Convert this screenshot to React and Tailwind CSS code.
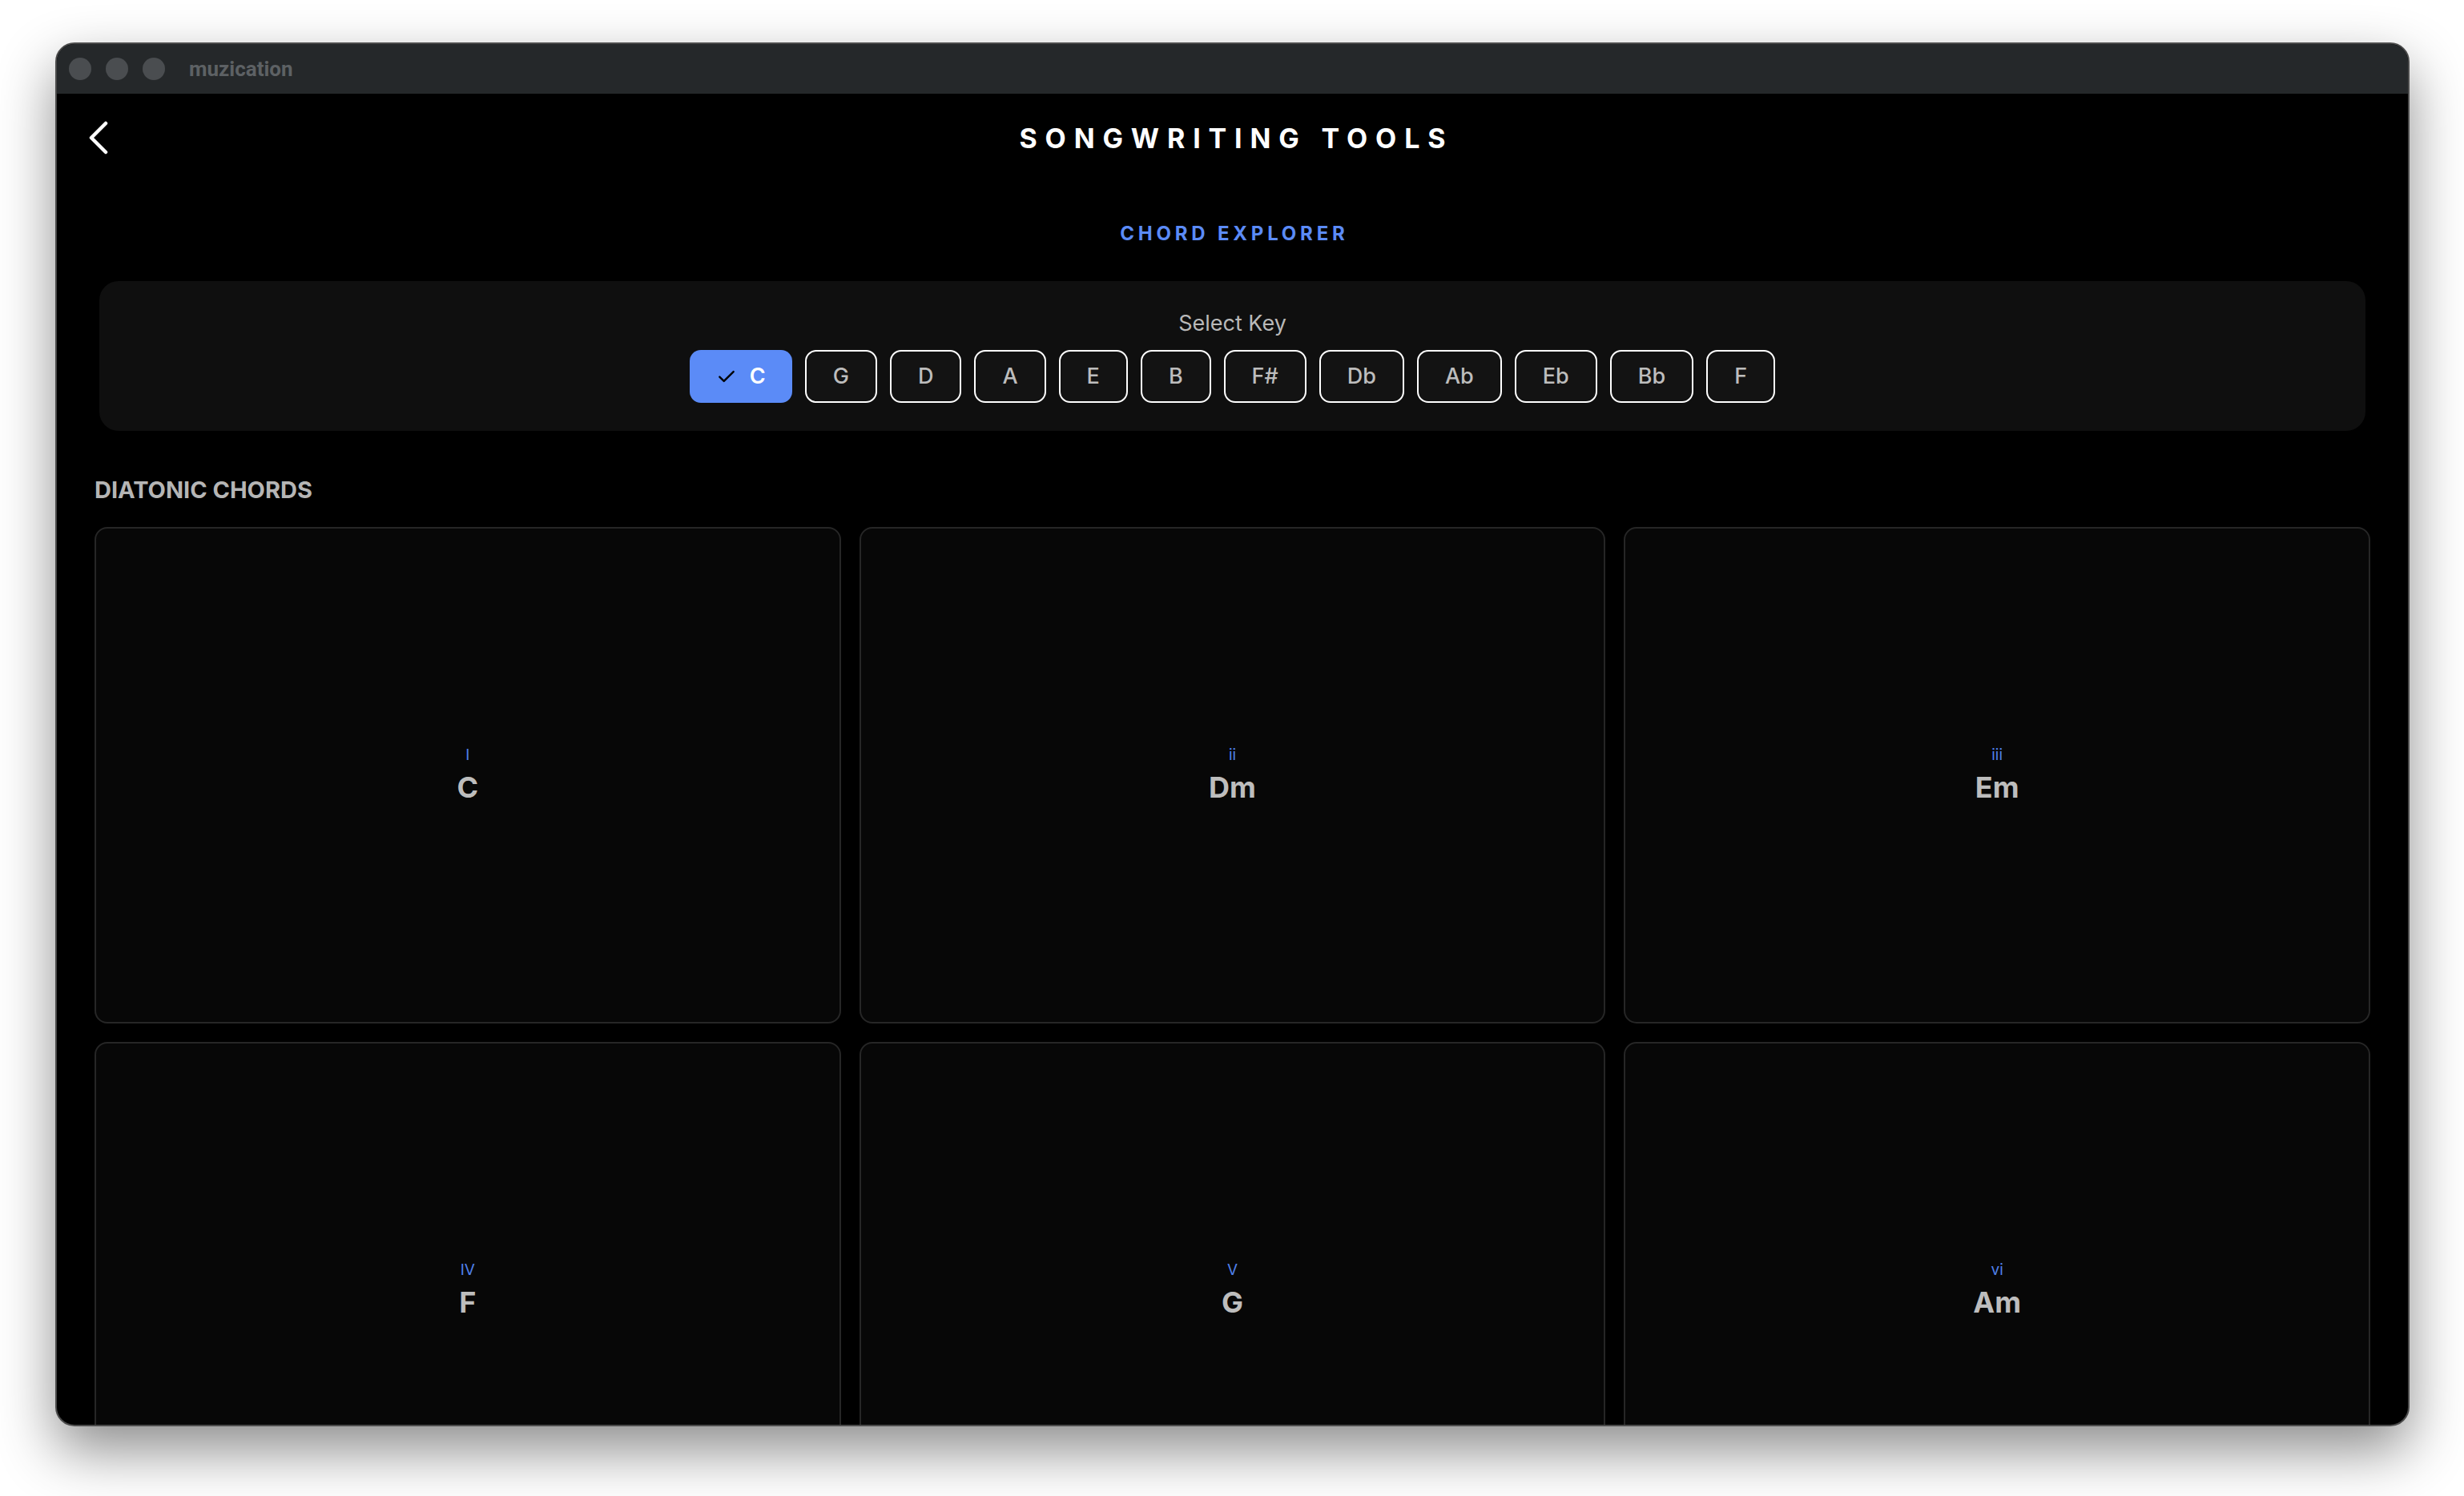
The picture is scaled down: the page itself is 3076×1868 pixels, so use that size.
import React, { useState } from "react"

const keys = ["C", "G", "D", "A", "E", "B", "F#", "Db", "Ab", "Eb", "Bb", "F"]

const chords = [
  { num: "I", name: "C" },
  { num: "ii", name: "Dm" },
  { num: "iii", name: "Em" },
  { num: "IV", name: "F" },
  { num: "V", name: "G" },
  { num: "vi", name: "Am" },
]

function TrafficLight() {
  return <div className="w-[28px] h-[28px] rounded-full bg-[#4a4d50]" />
}

function KeyButton({ k, active, onClick }) {
  if (active) {
    return (
      <button
        onClick={onClick}
        className="h-[66px] px-[33px] flex items-center gap-[16px] rounded-[14px] bg-[#5b8bf7] text-white text-[27px] font-semibold"
      >
        <svg width="26" height="26" viewBox="0 0 24 24" fill="none" stroke="black" strokeWidth="2.2" strokeLinecap="round" strokeLinejoin="round">
          <path d="M4 12.5l5 5L20 6.5" />
        </svg>
        {k}
      </button>
    )
  }
  return (
    <button
      onClick={onClick}
      className="h-[66px] px-[33px] flex items-center justify-center rounded-[14px] border-[2.5px] border-white bg-[#131313] text-[#bdbdbd] text-[27px] font-medium"
    >
      {k}
    </button>
  )
}

function ChordCard({ chord }) {
  return (
    <div className="h-[620px] shrink-0 rounded-[16px] border-2 border-[#262626] bg-[#070707] flex flex-col items-center justify-center">
      <div className="text-[19px] leading-[24px] text-[#4f80ea] mb-[6px]">{chord.num}</div>
      <div className="text-[36px] leading-[44px] font-bold text-[#bdbdbd]">{chord.name}</div>
    </div>
  )
}

export default function App() {
  const [selected, setSelected] = useState("C")

  return (
    <div className="w-[3076px] h-[1868px] bg-white overflow-hidden" style={{ fontFamily: "Inter, 'Noto Sans', sans-serif" }}>
      <div className="ml-[69px] mt-[53px] w-[2939px] h-[1728px] rounded-[24px] border-2 border-[#4b4b4b] bg-black overflow-hidden flex flex-col shadow-[0_30px_70px_rgba(0,0,0,0.45)]">
        {/* title bar */}
        <div className="h-[62px] shrink-0 bg-[#25282a] flex items-center pl-[15px]">
          <div className="flex gap-[18px]">
            <TrafficLight />
            <TrafficLight />
            <TrafficLight />
          </div>
          <div className="ml-[30px] text-[26px] font-bold text-[#5d6164]" style={{ fontFamily: "Roboto, sans-serif" }}>
            muzication
          </div>
        </div>

        {/* content */}
        <div className="flex-1 overflow-hidden px-[47px]">
          <div className="relative h-[110px] flex items-center justify-center">
            <button className="absolute left-[-14px] top-[34px] w-[40px] h-[42px] flex items-center justify-center">
              <svg width="28" height="42" viewBox="0 0 28 42" fill="none" stroke="white" strokeWidth="4.5" strokeLinecap="round" strokeLinejoin="round">
                <path d="M22 3L4 21l18 18" />
              </svg>
            </button>
            <h1 className="text-[34px] font-bold text-white tracking-[0.29em] pl-[0.29em]">SONGWRITING TOOLS</h1>
          </div>

          <div className="h-[124px] flex items-center justify-center">
            <div className="text-[24px] font-bold text-[#5b8bf7] tracking-[0.2em] pl-[0.2em] mt-[6px]">CHORD EXPLORER</div>
          </div>

          <div className="mx-[6px] h-[187px] rounded-[24px] bg-[#0f0f0f] flex flex-col items-center pt-[36px]">
            <div className="text-[27px] leading-[34px] text-[#b9b9b9]">Select Key</div>
            <div className="mt-[16px] flex gap-[16px]">
              {keys.map((k) => (
                <KeyButton key={k} k={k} active={k === selected} onClick={() => setSelected(k)} />
              ))}
            </div>
          </div>

          <div className="mt-[56px] text-[29px] leading-[36px] font-bold text-[#b5b5b5]">DIATONIC CHORDS</div>

          <div className="mt-[28px] grid grid-cols-3 gap-[23px]">
            {chords.map((c) => (
              <ChordCard key={c.num} chord={c} />
            ))}
          </div>
        </div>
      </div>
    </div>
  )
}
